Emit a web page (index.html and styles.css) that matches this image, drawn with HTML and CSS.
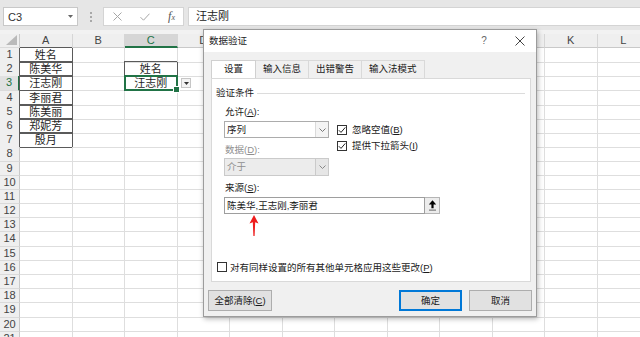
FILE: index.html
```html
<!DOCTYPE html>
<html lang="zh-CN">
<head>
<meta charset="utf-8">
<title>数据验证</title>
<link rel="stylesheet" href="styles.css">
</head>
<body>
<div class="fbar">
  <div class="namebox"><span>C3</span><svg width="5" height="3" viewBox="0 0 5 3"><path d="M0 0h5L2.5 3z" fill="#666"/></svg></div>
  <div class="grip"><i></i><i></i><i></i></div>
  <div class="fbtns">
    <svg width="9" height="9" viewBox="0 0 9 9"><path d="M.5.5l8 8M8.5.5l-8 8" stroke="#a6a6a6" stroke-width="1"/></svg>
    <svg width="10" height="8" viewBox="0 0 10 8"><path d="M.5 4.2 3.5 7.2 9.5.7" fill="none" stroke="#a6a6a6" stroke-width="1"/></svg>
    <span class="fx">f<small>x</small></span>
  </div>
  <div class="finput">汪志刚</div>
</div>
<div class="band"></div>
<div class="sheet">
  <div class="row head"><b class="corner"></b><i>A</i><i>B</i><i class="on">C</i><i>D</i><i>E</i><i>F</i><i>G</i><i>H</i><i>I</i><i>J</i><i>K</i><i>L</i></div>
  <div class="row"><b>1</b><i class="bx">姓名</i><i></i><i></i><i></i><i></i><i></i><i></i><i></i><i></i><i></i><i></i><i></i></div>
  <div class="row"><b>2</b><i class="bx">陈美华</i><i></i><i class="bx">姓名</i><i></i><i></i><i></i><i></i><i></i><i></i><i></i><i></i><i></i></div>
  <div class="row"><b class="on">3</b><i class="bx">汪志刚</i><i></i><i class="bx sel">汪志刚<span class="dd"><svg width="5" height="3" viewBox="0 0 5 3"><path d="M0 0h5L2.5 3z" fill="#333"/></svg></span></i><i></i><i></i><i></i><i></i><i></i><i></i><i></i><i></i><i></i></div>
  <div class="row"><b>4</b><i class="bx">李丽君</i><i></i><i></i><i></i><i></i><i></i><i></i><i></i><i></i><i></i><i></i><i></i></div>
  <div class="row"><b>5</b><i class="bx">陈美丽</i><i></i><i></i><i></i><i></i><i></i><i></i><i></i><i></i><i></i><i></i><i></i></div>
  <div class="row"><b>6</b><i class="bx">郑妮芳</i><i></i><i></i><i></i><i></i><i></i><i></i><i></i><i></i><i></i><i></i><i></i></div>
  <div class="row"><b>7</b><i class="bx">殷月</i><i></i><i></i><i></i><i></i><i></i><i></i><i></i><i></i><i></i><i></i><i></i></div>
  <div class="row"><b>8</b><i></i><i></i><i></i><i></i><i></i><i></i><i></i><i></i><i></i><i></i><i></i><i></i></div>
  <div class="row"><b>9</b><i></i><i></i><i></i><i></i><i></i><i></i><i></i><i></i><i></i><i></i><i></i><i></i></div>
  <div class="row"><b>10</b><i></i><i></i><i></i><i></i><i></i><i></i><i></i><i></i><i></i><i></i><i></i><i></i></div>
  <div class="row"><b>11</b><i></i><i></i><i></i><i></i><i></i><i></i><i></i><i></i><i></i><i></i><i></i><i></i></div>
  <div class="row"><b>12</b><i></i><i></i><i></i><i></i><i></i><i></i><i></i><i></i><i></i><i></i><i></i><i></i></div>
  <div class="row"><b>13</b><i></i><i></i><i></i><i></i><i></i><i></i><i></i><i></i><i></i><i></i><i></i><i></i></div>
  <div class="row"><b>14</b><i></i><i></i><i></i><i></i><i></i><i></i><i></i><i></i><i></i><i></i><i></i><i></i></div>
  <div class="row"><b>15</b><i></i><i></i><i></i><i></i><i></i><i></i><i></i><i></i><i></i><i></i><i></i><i></i></div>
  <div class="row"><b>16</b><i></i><i></i><i></i><i></i><i></i><i></i><i></i><i></i><i></i><i></i><i></i><i></i></div>
  <div class="row"><b>17</b><i></i><i></i><i></i><i></i><i></i><i></i><i></i><i></i><i></i><i></i><i></i><i></i></div>
  <div class="row"><b>18</b><i></i><i></i><i></i><i></i><i></i><i></i><i></i><i></i><i></i><i></i><i></i><i></i></div>
  <div class="row"><b>19</b><i></i><i></i><i></i><i></i><i></i><i></i><i></i><i></i><i></i><i></i><i></i><i></i></div>
  <div class="row"><b>20</b><i></i><i></i><i></i><i></i><i></i><i></i><i></i><i></i><i></i><i></i><i></i><i></i></div>
  <div class="row"><b>21</b><i></i><i></i><i></i><i></i><i></i><i></i><i></i><i></i><i></i><i></i><i></i><i></i></div>
</div>

<div class="dialog">
  <div class="titlebar">
    <span class="ttl">数据验证</span>
    <span class="help">?</span>
    <span class="close"><svg width="10" height="10" viewBox="0 0 10 10"><path d="M.5.5l9 9M9.5.5l-9 9" stroke="#444" stroke-width="1"/></svg></span>
  </div>
  <div class="dbody">
    <div class="tabs">
      <span class="tab on">设置</span><span class="tab">输入信息</span><span class="tab">出错警告</span><span class="tab">输入法模式</span>
    </div>
    <div class="panel">
      <div class="legend"><span>验证条件</span><i></i></div>
      <div class="crit">
        <div class="lcol">
          <div class="lbl">允许(<u>A</u>):</div>
          <div class="combo"><span>序列</span><b><svg width="7" height="4" viewBox="0 0 7 4"><path d="M.5.5 3.5 3.5 6.5.5" fill="none" stroke="#777" stroke-width="1"/></svg></b></div>
          <div class="lbl dim">数据(<u>D</u>):</div>
          <div class="combo off"><span>介于</span><b><svg width="7" height="4" viewBox="0 0 7 4"><path d="M.5.5 3.5 3.5 6.5.5" fill="none" stroke="#888" stroke-width="1"/></svg></b></div>
        </div>
        <div class="rcol">
          <div class="chk"><span class="box"><svg width="8" height="8" viewBox="0 0 8 8"><path d="M.8 4.2 3 6.4 7.3 1.4" fill="none" stroke="#222" stroke-width="1"/></svg></span><span>忽略空值(<u>B</u>)</span></div>
          <div class="chk"><span class="box"><svg width="8" height="8" viewBox="0 0 8 8"><path d="M.8 4.2 3 6.4 7.3 1.4" fill="none" stroke="#222" stroke-width="1"/></svg></span><span>提供下拉箭头(<u>I</u>)</span></div>
        </div>
      </div>
      <div class="lbl src-lbl">来源(<u>S</u>):</div>
      <div class="src">
        <div class="srcin">陈美华,王志刚,李丽君</div>
        <div class="srcbtn"><svg width="9" height="11" viewBox="0 0 9 11"><path d="M4.5.3 8.2 4.6H5.6V8.2H3.4V4.6H.8z" fill="#000"/><rect x="1" y="9.6" width="7" height="1" fill="#666"/></svg></div>
      </div>
      <svg class="arrow" width="10" height="21" viewBox="0 0 10 21"><path d="M5 0 9.5 8.5 6.2 7.2 5.6 21H4.4L3.8 7.2.5 8.5z" fill="#ee1c1c"/></svg>
      <div class="chk apply"><span class="box"></span><span>对有同样设置的所有其他单元格应用这些更改(<u>P</u>)</span></div>
    </div>
    <div class="btns">
      <span class="btn">全部清除(<u>C</u>)</span>
      <span class="grow"></span>
      <span class="btn def">确定</span>
      <span class="btn">取消</span>
    </div>
  </div>
</div>
</body>
</html>
```

FILE: styles.css
```css
* { box-sizing: border-box; margin: 0; padding: 0; }
html, body { width: 640px; height: 337px; overflow: hidden; background: #fff; }
body {
  position: relative;
  font-family: "Liberation Sans", "Noto Sans CJK SC", sans-serif;
  color: #222;
}

/* formula bar */
.fbar {
  height: 30px;
  background: #e6e6e6;
  display: flex;
  align-items: flex-start;
  padding: 7px 0 0 3px;
}
.namebox {
  width: 75px; height: 19px;
  background: #fff;
  border: 1px solid #c8c8c8;
  display: flex; align-items: center; justify-content: space-between;
  padding: 0 4px 0 4px;
  font-size: 11px; color: #333;
}
.grip {
  width: 25px; height: 19px;
  display: flex; flex-direction: column; align-items: center; justify-content: center; gap: 2px;
}
.grip i { width: 2px; height: 2px; background: #a8a8a8; }
.fbtns {
  width: 81px; height: 19px;
  background: #fff;
  border: 1px solid #d4d4d4;
  display: flex; align-items: center; justify-content: space-between;
  padding: 0 8px 0 9px;
}
.fx {
  font-family: "Liberation Serif", serif;
  font-style: italic;
  font-size: 12px;
  color: #555;
  line-height: 12px;
}
.fx small { font-size: 8px; }
.finput {
  flex: 1;
  margin-left: 4px;
  height: 19px;
  background: #fff;
  border: 1px solid #d4d4d4;
  border-right: none;
  padding-left: 7px;
  font-family: "Liberation Sans", "Noto Sans CJK SC", sans-serif;
  font-size: 11px; line-height: 17px; color: #222;
}
.band { height: 4px; background: #f2f2f2; }

/* sheet */
.row {
  display: grid;
  grid-template-columns: 20px repeat(12, 52.5px);
  height: 14.2px;
}
.row > i {
  font-style: normal;
  border-right: 1px solid #dedede;
  border-bottom: 1px solid #dedede;
  font-family: "Liberation Sans", "Noto Sans CJK SC", sans-serif;
  font-size: 11px; line-height: 13px;
  padding-top: 1px;
  text-align: center; color: #1e1e1e;
  white-space: nowrap;
}
.row > b {
  font-weight: normal;
  background: #efefef;
  border-right: 1px solid #c9c9c9;
  border-bottom: 1px solid #dadada;
  font-size: 11px; line-height: 13px;
  text-align: center; color: #444;
}
.row > b.on {
  background: #e1e1e1;
  color: #217346;
  border-right: 2px solid #217346;
}
.head { height: 14px; }
.head > i {
  background: #efefef;
  border-right: 1px solid #d6d6d6;
  border-bottom: 1px solid #c9c9c9;
  color: #444; line-height: 13px;
  padding-top: 0;
}
.head > i.on {
  background: #d6d6d6;
  color: #217346;
  border-bottom: 2px solid #217346;
  line-height: 12px;
}
.corner { position: relative; }
.corner::after {
  content: "";
  position: absolute; right: 2px; bottom: 2px;
  width: 0; height: 0;
  border-left: 11px solid transparent;
  border-bottom: 10px solid #b9b9b9;
}
.row > i.bx {
  border-right-color: #5a5a5a;
  border-bottom-color: #5a5a5a;
  box-shadow: -1px -1px 0 #5a5a5a;
}
.row > i.sel { position: relative; }
.sel::before {
  content: "";
  position: absolute; left: -1px; top: -1px; right: -1px; bottom: -1px;
  border: 2px solid #217346;
}
.sel::after {
  content: "";
  position: absolute; right: -3px; bottom: -3px;
  width: 5px; height: 5px;
  background: #217346;
  border: 1px solid #fff;
}
.dd {
  position: absolute; left: 56px; top: 2px;
  width: 10px; height: 10px;
  background: #f3f3f3;
  border: 1px solid #c6c6c6;
  display: flex; align-items: center; justify-content: center;
}

/* dialog */
.dialog {
  position: absolute; left: 203px; top: 29px;
  width: 334px; height: 288px;
  border: 1px solid #9c9c9c;
  box-shadow: 1px 2px 5px rgba(0,0,0,.28);
  background: #f0f0f0;
  display: flex; flex-direction: column;
  font-family: "Liberation Sans", "Noto Sans CJK SC", sans-serif;
  font-size: 9.5px; color: #1a1a1a;
  z-index: 5;
}
.titlebar {
  height: 22px;
  background: #fff;
  display: flex; align-items: center;
  padding-left: 5px;
}
.ttl { flex: 1; line-height: 12px; }
.help {
  width: 20px; text-align: center;
  color: #666; font-size: 10px; line-height: 12px;
}
.close {
  width: 24px; height: 22px;
  margin: 0 4px 0 14px;
  display: flex; align-items: center; justify-content: center;
}
.dbody {
  flex: 1;
  display: flex; flex-direction: column;
  padding: 8px 0 5px 0;
}
.tabs {
  display: flex;
  height: 18px;
  margin-left: 7px;
}
.tab {
  height: 18px;
  padding: 0 7px;
  border: 1px solid #d9d9d9;
  border-bottom: none;
  margin-left: -1px;
  line-height: 16px;
  background: #f0f0f0;
}
.tab:first-child { margin-left: 0; }
.tab.on {
  position: relative;
  padding: 0 12px;
  height: 19px;
  margin-bottom: -1px;
  background: #fff;
  border-color: #d0d0d0;
}
.panel {
  position: relative;
  width: 320px; height: 204px;
  margin-left: 7px;
  background: #fff;
  border: 1px solid #d9d9d9;
  display: flex; flex-direction: column;
  padding: 8px 5px 7.5px 4px;
}
.legend {
  display: flex; align-items: center;
  height: 12px; line-height: 12px;
}
.legend i { flex: 1; border-top: 1px solid #dcdcdc; margin-left: 3px; }
.crit { display: flex; margin: 6px 0 0 8px; }
.lcol { width: 105px; display: flex; flex-direction: column; }
.lbl { height: 13px; line-height: 13px; padding-left: 1px; }
.lbl.dim { color: #8f8f8f; margin-top: 5px; }
.combo {
  margin-top: 3px;
  height: 17px;
  border: 1px solid #acacac;
  background: #fff;
  display: flex;
}
.combo span { flex: 1; line-height: 15px; padding-left: 2px; }
.combo b {
  width: 13px;
  border-left: 1px solid #dadada;
  background: #f4f4f4;
  display: flex; align-items: center; justify-content: center;
}
.combo.off {
  margin-top: 2px;
  height: 18px;
  background: #ececec;
  border-color: #cacaca;
  color: #8f8f8f;
}
.combo.off span { line-height: 16px; }
.combo.off b { background: #e6e6e6; border-left-color: #cacaca; }
.rcol {
  margin-left: 8px;
  padding-top: 18px;
  display: flex; flex-direction: column; gap: 3px;
}
.chk { display: flex; align-items: center; height: 13px; line-height: 13px; gap: 5px; }
.box {
  width: 10px; height: 10px;
  border: 1px solid #333;
  background: #fff;
  display: flex; align-items: center; justify-content: center;
}
.src-lbl { margin: 5px 0 0 8px; }
.src { display: flex; height: 17px; margin: 3px 0 0 8px; }
.srcin {
  width: 201px;
  border: 1px solid #9e9e9e;
  line-height: 15px;
  padding-left: 2px;
  white-space: nowrap;
}
.srcbtn {
  width: 15px;
  border: 1px solid #b5b5b5;
  border-left: none;
  background: #ececec;
  display: flex; align-items: center; justify-content: center;
}
.arrow { position: absolute; left: 37px; top: 136px; }
.apply { margin-top: auto; margin-left: 1px; gap: 3px; }
.btns { display: flex; margin-top: 8px; padding: 0 4px; gap: 7px; }
.grow { flex: 1; }
.btn {
  width: 63px; height: 21px;
  background: #e1e1e1;
  border: 1px solid #adadad;
  text-align: center; line-height: 19px;
}
.btn:first-child { width: 64px; }
.btn.def { border-color: #0078d7; box-shadow: inset 0 0 0 1px #0078d7; }
```
